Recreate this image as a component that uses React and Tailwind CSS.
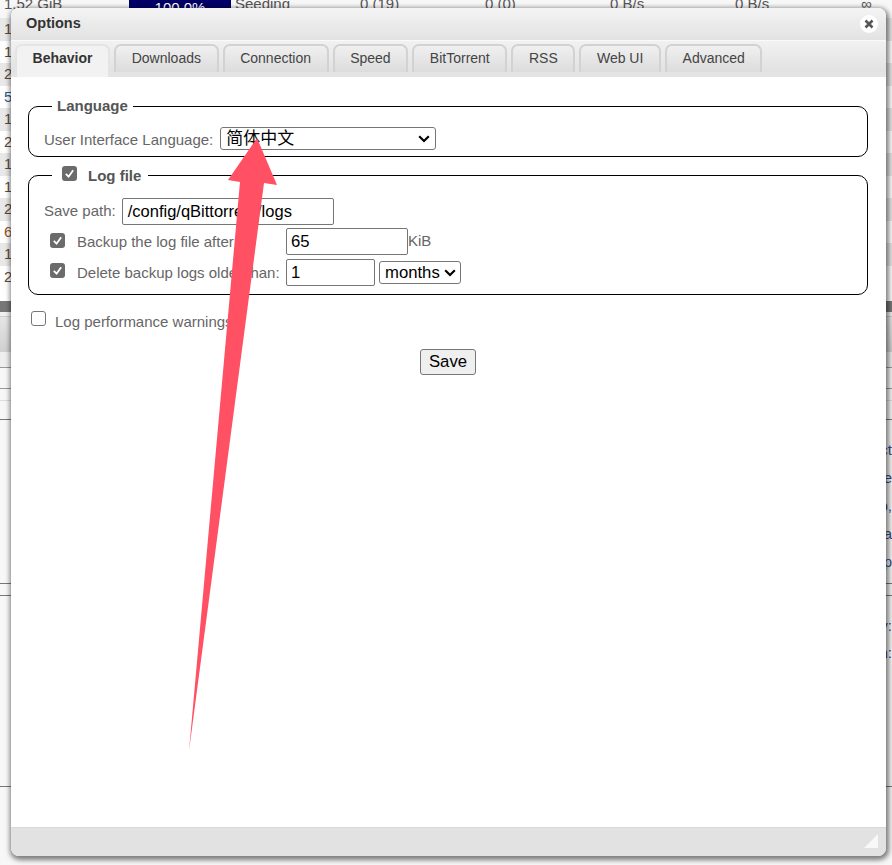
const leftRows = ['1', '1', '2', '5', '1', '2', '1', '1', '2', '6', '1', '2']

const tabs = ['Behavior', 'Downloads', 'Connection', 'Speed', 'BitTorrent', 'RSS', 'Web UI', 'Advanced']

function Check({ checked, className = '' }) {
  if (!checked) {
    return <span className={`block shrink-0 w-[15px] h-[15px] rounded-[3px] border border-[#767676] bg-white ${className}`} />
  }
  return (
    <span className={`flex shrink-0 items-center justify-center w-[15px] h-[15px] rounded-[3px] bg-[#6b6b6b] ${className}`}>
      <svg width="11" height="11" viewBox="0 0 12 12" fill="none">
        <path d="M2 6.5 L5 9.5 L10 2.5" stroke="white" strokeWidth="2" />
      </svg>
    </span>
  )
}

function Chevron() {
  return (
    <svg width="12" height="8" viewBox="0 0 12 8" fill="none">
      <path d="M1.2 1.3 L6 6 L10.8 1.3" stroke="black" strokeWidth="2.2" />
    </svg>
  )
}

function Background() {
  return (
    <div className="w-full h-[865px] bg-[#f7f7f7] overflow-hidden text-[15px] text-[#555]">
      <div className="flex h-[11px] mb-[7px] items-end">
        <span className="w-[129px] pl-[4px] leading-none">1.52 GiB</span>
        <span className="w-[102px] h-[11px] bg-[#000066] text-white text-center leading-none">100.0%</span>
        <span className="ml-1 w-[125px] leading-none">Seeding</span>
        <span className="w-[125px] leading-none">0 (19)</span>
        <span className="w-[125px] leading-none">0 (0)</span>
        <span className="w-[125px] leading-none">0 B/s</span>
        <span className="w-[126px] leading-none">0 B/s</span>
        <span className="leading-none">∞</span>
      </div>
      <div className="flex flex-col">
        {leftRows.map((digit, i) => (
          <div key={i} className={`h-[22.5px] pl-[4px] leading-[22px] ${i % 2 ? 'bg-white' : 'bg-[#e8e8e8]'} ${digit === '5' ? 'text-[#2a5a8a]' : digit === '6' ? 'text-[#8a5a2a]' : 'text-[#5a4a3a]'}`}>
            {digit}
          </div>
        ))}
      </div>
      <div className="h-[13px] bg-white" />
      <div className="h-[11px] bg-[#777777]" />
      <div className="h-[5px] bg-[#f0f0f0] border-b border-[#cccccc]" />
      <div className="h-[35px] bg-gradient-to-b from-[#e6e6e6] to-[#cfcfcf]" />
      <div className="h-[15px] bg-[#eeeeee]" />
      <div className="h-[1px] bg-[#999999]" />
      <div className="h-[21px] border-b border-[#999999]" />
      <div className="h-[12px] border-b border-[#dddddd]" />
      <div className="h-[19px] border-b border-[#777777]" />
      <div className="h-[164px] border-b border-[#777777] flex flex-col items-end pt-[19px] gap-[7px] leading-[21px] text-[#3a4a7a]">
        <span>ct</span>
        <span>ie</span>
        <span>p,</span>
        <span>a</span>
        <span>ip</span>
      </div>
      <div className="h-[12px] border-b border-[#777777]" />
      <div className="h-[191px] border-b border-[#777777] flex flex-col items-end pt-[19px] gap-[6px] leading-[21px] text-[#3a4a7a]">
        <span>v:</span>
        <span>n:</span>
      </div>
    </div>
  )
}

export default function App() {
  return (
    <div className="relative w-[892px] h-[865px] overflow-hidden font-['Liberation_Sans',Arial,sans-serif]">
      <Background />

      {/* options window */}
      <div className="absolute left-[11px] top-[8px] w-[875px] h-[848px] flex flex-col rounded-[8px] overflow-hidden shadow-[1px_2px_5px_2px_rgba(0,0,0,0.5)] bg-white">
        <div className="h-[32px] flex items-center justify-between pl-[15px] pr-[8px] bg-gradient-to-b from-[#f4f4f4] to-[#e2e2e2]">
          <span className="text-[14.5px] font-bold text-[#333]">Options</span>
          <span className="flex items-center justify-center w-[18px] h-[18px] rounded-full bg-white">
            <svg width="10" height="10" viewBox="0 0 10 10">
              <path d="M1.5 1.5 L8.5 8.5 M8.5 1.5 L1.5 8.5" stroke="#555" strokeWidth="2.6" />
            </svg>
          </span>
        </div>

        <div className="h-[37px] flex items-end gap-[4px] pl-[4px] pt-[4px] bg-gradient-to-b from-[#f1f1f1] to-[#e2e2e2] border-t border-[#fafafa] border-b-[5px] border-b-[#e4e4e4]">
          {tabs.map((t, i) => (
            <div
              key={t}
              className={`flex items-center justify-center rounded-t-[7px] border-2 border-b-0 text-[14px] px-[15.6px] ${
                i === 0
                  ? 'bg-[#f2f2f2] font-bold text-[#333] h-[33px] -mb-[5px] pb-[7px] border-[#e4e4e4]'
                  : 'h-[28px] pb-[2px] border-[#d2d2d2] bg-gradient-to-b from-[#f0f0f0] to-[#dcdcdc] text-[#444]'
              }`}
            >
              {t}
            </div>
          ))}
        </div>

        <div className="flex-1 flex flex-col bg-white pl-[17px] pr-[18px] pt-[29px] text-[15px] text-[#666]">
          <div className="relative h-[51px] border border-black rounded-[10px] pl-[15px] pt-[17px] flex items-center gap-[7px]">
            <span className="absolute -top-[12px] left-[23px] px-[5px] bg-white text-[15px] leading-[22px] font-bold text-[#555]">Language</span>
            <span>User Interface Language:</span>
            <div className="-mt-[3px] w-[216px] h-[23px] border border-[#767676] rounded-[3px] flex items-center justify-between px-[5px] text-[17px] text-black font-['Liberation_Sans','Noto_Sans_CJK_SC',sans-serif]">
              <span>简体中文</span>
              <Chevron />
            </div>
          </div>

          <div className="relative mt-[18px] h-[120px] border border-black rounded-[10px] pl-[15px] pt-[22px] flex flex-col">
            <span className="absolute -top-[11px] left-[23px] pl-[36px] pr-[7px] bg-white text-[15px] leading-[22px] font-bold text-[#555]">Log file</span>
            <Check checked className="absolute -top-[10px] left-[33px]" />
            <div className="flex items-center gap-[6px] h-[27px]">
              <span>Save path:</span>
              <div className="w-[212px] h-[27px] border border-[#767676] rounded-[2px] pl-[5px] text-[16.5px] text-black leading-[25px]">/config/qBittorrent/logs</div>
            </div>
            <div className="flex items-center h-[27px] mt-[3px] pl-[6px]">
              <Check checked className="-mt-[3px]" />
              <span className="ml-[12px] mt-[2px] w-[209px]">Backup the log file after:</span>
              <div className="w-[122px] h-[27px] border border-[#767676] rounded-[2px] pl-[4px] text-[16.7px] text-black leading-[25px]">65</div>
              <span>KiB</span>
            </div>
            <div className="flex items-center h-[27px] mt-[4px] pl-[6px]">
              <Check checked className="-mt-[4px]" />
              <span className="ml-[12px] mt-[2px] w-[209px] whitespace-nowrap">Delete backup logs older than:</span>
              <div className="w-[89px] h-[27px] border border-[#767676] rounded-[2px] pl-[4px] text-[16.7px] text-black leading-[25px]">1</div>
              <div className="ml-[4px] w-[82px] h-[23px] border border-[#767676] rounded-[3px] flex items-center justify-between pl-[5px] pr-[4px] text-[16.7px] text-black">
                <span>months</span>
                <Chevron />
              </div>
            </div>
          </div>

          <div className="flex items-center mt-[17px] pl-[3px] h-[20px]">
            <Check className="-mt-[7px]" />
            <span className="ml-[9px]">Log performance warnings</span>
          </div>

          <div className="flex justify-center mt-[17px]">
            <div className="w-[56px] h-[26px] border border-[#767676] rounded-[3px] bg-[#efefef] flex items-center justify-center text-[16.7px] text-black">Save</div>
          </div>
        </div>

        <div className="h-[29px] flex items-end justify-end pr-[8px] pb-[8px] bg-[#e2e2e2] border-t border-[#d8d8d8]">
          <svg width="14" height="14" viewBox="0 0 14 14"><polygon points="14,0 14,14 0,14" fill="#f8f8f8" /></svg>
        </div>
      </div>

      {/* annotation arrow */}
      <svg className="absolute left-0 top-0" width="892" height="865" viewBox="0 0 892 865">
        <polygon points="189,751 240,182 228,180 257,138 277,185 264,183" fill="#ff5064" />
      </svg>
    </div>
  )
}
